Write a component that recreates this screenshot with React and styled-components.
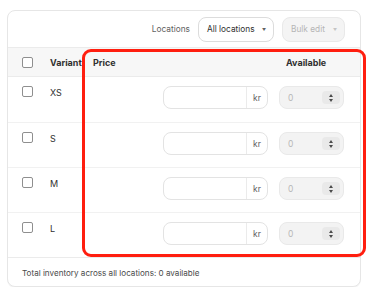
import React from "react";
import styled, { createGlobalStyle } from "styled-components";

const Global = createGlobalStyle`
  body {
    margin: 0;
    background: #ffffff;
    font-family: Inter, "Noto Sans", sans-serif;
    color: #303030;
  }
`;

const Page = styled.div`
  padding: 10px 9px 0 7px;
`;

const Card = styled.div`
  position: relative;
  width: 354px;
  height: 277px;
  box-sizing: border-box;
  border: 1px solid #e6e6e6;
  border-radius: 8px;
  background: #fff;
  box-shadow: 0 1px 0 rgba(0, 0, 0, 0.04);
`;

const Toolbar = styled.div`
  height: 36px;
  display: flex;
  align-items: center;
  justify-content: flex-end;
  gap: 8px;
  padding-right: 15px;
`;

const Label = styled.span`
  font-size: 8.3px;
  color: #616161;
`;

const Select = styled.div`
  height: 25px;
  box-sizing: border-box;
  display: flex;
  align-items: center;
  padding: 0 7px 0 8px;
  border: 1px solid ${(p) => (p.disabled ? "#e9e9e9" : "#dcdcdc")};
  border-radius: 8px;
  background: ${(p) => (p.disabled ? "#f4f4f4" : "#fff")};
  color: ${(p) => (p.disabled ? "#b5b5b5" : "#303030")};
  font-size: 8.3px;
  white-space: nowrap;
  width: ${(p) => p.w}px;
`;

const Caret = styled.span`
  font-size: 4px;
  margin-left: auto;
  color: ${(p) => (p.disabled ? "#c4c4c4" : "#616161")};
`;

const Row = styled.div`
  display: grid;
  grid-template-columns: 28px 43px 1fr 105px 76px;
  align-items: start;
  padding: 0 16px 0 14px;
  height: ${(p) => (p.head ? 30 : 45)}px;
  box-sizing: border-box;
  background: ${(p) => (p.head ? "#f7f7f7" : "#fff")};
  border-top: 1px solid ${(p) => (p.head ? "#ebebeb" : "#f1f1f1")};
  border-bottom: ${(p) => (p.head ? "1px solid #ebebeb" : "none")};
`;

const Check = styled.span`
  display: block;
  width: 9px;
  height: 9px;
  border: 1px solid #8f8f8f;
  border-radius: 2px;
  margin-top: 9px;
  background: #fff;
`;

const HeadText = styled.span`
  font-size: 9px;
  font-weight: 700;
  color: #303030;
  line-height: 29px;
  white-space: nowrap;
  padding-left: ${(p) => p.indent || 0}px;
`;

const CellText = styled.span`
  font-size: 9px;
  color: #303030;
  line-height: 1;
  margin-top: 11px;
`;

const Field = styled.div`
  margin-top: 9px;
  margin-left: ${(p) => (p.disabled ? 11 : 0)}px;
  height: 23px;
  box-sizing: border-box;
  display: flex;
  align-items: center;
  border: 1px solid ${(p) => (p.disabled ? "#e9e9e9" : "#e3e3e3")};
  border-radius: 8px;
  background: ${(p) => (p.disabled ? "#f3f3f3" : "#fff")};
  overflow: hidden;
`;

const Suffix = styled.span`
  margin-left: auto;
  width: 20px;
  height: 100%;
  border-left: 1px solid #ebebeb;
  display: flex;
  align-items: center;
  justify-content: center;
  font-size: 8.5px;
  color: #616161;
`;

const Placeholder = styled.span`
  font-size: 8.5px;
  color: #b8b8b8;
  padding-left: 8px;
`;

const Stepper = styled.span`
  margin-left: auto;
  margin-right: 3px;
  width: 18px;
  height: 13px;
  border-radius: 4px;
  background: #e9e9e9;
  display: flex;
  flex-direction: column;
  align-items: center;
  justify-content: center;
  gap: 2px;
`;

const Arrow = styled.span`
  width: 0;
  height: 0;
  border-left: 2px solid transparent;
  border-right: 2px solid transparent;
  ${(p) =>
    p.up
      ? "border-bottom: 3px solid #4a4a4a;"
      : "border-top: 3px solid #4a4a4a;"}
`;

const Footer = styled.div`
  border-top: 1px solid #ebebeb;
  height: 30px;
  display: flex;
  align-items: center;
  padding-left: 14px;
  font-size: 8.1px;
  color: #4a4a4a;
`;

const Highlight = styled.div`
  position: absolute;
  left: 74px;
  top: 38px;
  width: 284px;
  height: 208px;
  box-sizing: border-box;
  border: 3px solid #ff1e0f;
  border-radius: 9px;
  pointer-events: none;
`;

const variants = ["XS", "S", "M", "L"];

const App = () => {
  return (
    <Page>
      <Global />
      <Card>
        <Toolbar>
          <Label>Locations</Label>
          <Select w={76}>
            All locations
            <Caret>▼</Caret>
          </Select>
          <Select w={63} disabled>
            Bulk edit
            <Caret disabled>▼</Caret>
          </Select>
        </Toolbar>
        <Row head>
          <Check />
          <HeadText>Variant</HeadText>
          <HeadText>Price</HeadText>
          <span />
          <HeadText indent={18}>Available</HeadText>
        </Row>
        {variants.map((v, i) => (
          <Row key={v} style={i === 0 ? { borderTop: "none" } : null}>
            <Check />
            <CellText>{v}</CellText>
            <span />
            <Field>
              <Suffix>kr</Suffix>
            </Field>
            <Field disabled>
              <Placeholder>0</Placeholder>
              <Stepper>
                <Arrow up />
                <Arrow />
              </Stepper>
            </Field>
          </Row>
        ))}
        <Footer>Total inventory across all locations: 0 available</Footer>
        <Highlight />
      </Card>
    </Page>
  );
};

export default App;
